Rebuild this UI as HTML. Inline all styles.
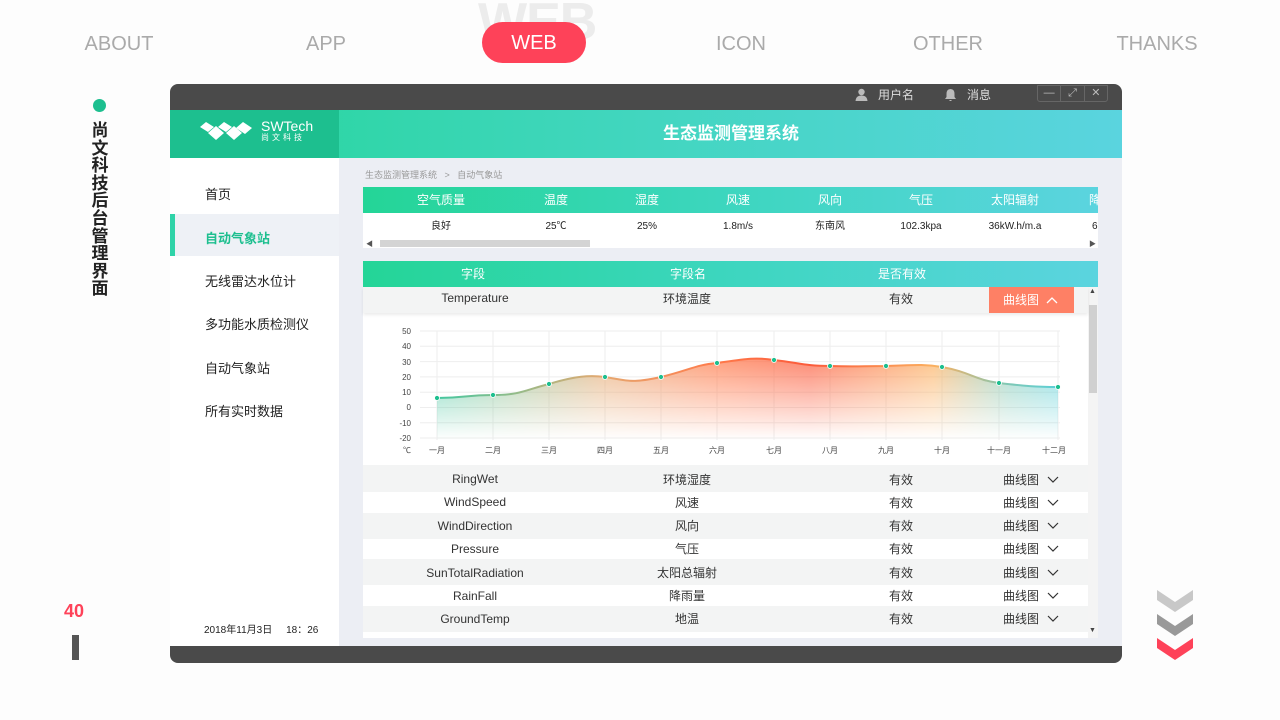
<!DOCTYPE html>
<html><head><meta charset="utf-8"><style>
*{margin:0;padding:0;box-sizing:border-box}
body{width:1280px;height:720px;background:#fdfdfd;position:relative;overflow:hidden;font-family:"Liberation Sans","Noto Sans CJK SC",sans-serif;color:#333}
.a{position:absolute}
.nav{top:32px;font-size:20px;line-height:24px;color:#aaa;transform:translateX(-50%);white-space:nowrap}
.c{transform:translateX(-50%);white-space:nowrap;text-align:center;line-height:16px}
.side{left:205px;font-size:13px;color:#222}
</style></head><body>
<div class="a" style="left:478px;top:-8px;font-size:52px;font-weight:bold;color:#ececec;letter-spacing:-1px">WEB</div>
<div class="a nav" style="left:119px">ABOUT</div>
<div class="a nav" style="left:326px">APP</div>
<div class="a" style="left:482px;top:22px;width:104px;height:41px;border-radius:21px;background:#fe4259;color:#fff;font-size:20px;text-align:center;line-height:43px">WEB</div>
<div class="a nav" style="left:741px">ICON</div>
<div class="a nav" style="left:948px">OTHER</div>
<div class="a nav" style="left:1157px">THANKS</div>

<div class="a" style="left:93px;top:99px;width:13px;height:13px;border-radius:50%;background:#1dbf8f"></div>
<div class="a" style="left:91px;top:122px;width:18px;font-size:17px;line-height:17.6px;font-weight:bold;color:#222;text-align:center">尚文科技后台管理界面</div>
<div class="a" style="left:64px;top:601px;font-size:18px;font-weight:bold;color:#fe4259">40</div>
<div class="a" style="left:72px;top:635px;width:7px;height:25px;background:#555"></div>

<svg class="a" style="left:1155px;top:588px" width="40" height="76" viewBox="0 0 40 76">
<polygon points="2,2 20,14 38,2 38,12 20,24 2,12" fill="#c8c8c8"/>
<polygon points="2,26 20,38 38,26 38,36 20,48 2,36" fill="#999"/>
<polygon points="2,50 20,62 38,50 38,60 20,72 2,60" fill="#fe4259"/>
</svg>

<!-- window -->
<div class="a" style="left:170px;top:84px;width:952px;height:579px;background:#4a4a4a;border-radius:8px"></div>
<div class="a" style="left:855px;top:87px;color:#ddd;font-size:12px;line-height:16px">
<svg width="13" height="13" viewBox="0 0 13 13" style="vertical-align:-2px"><circle cx="6.5" cy="4" r="3.2" fill="#bbb"/><path d="M0.5 13 Q1 7.5 6.5 7.5 Q12 7.5 12.5 13Z" fill="#bbb"/></svg>&nbsp;&nbsp; 用户名</div>
<div class="a" style="left:944px;top:87px;color:#ddd;font-size:12px;line-height:16px">
<svg width="13" height="13" viewBox="0 0 13 13" style="vertical-align:-2px"><path d="M6.5 1 Q2.5 1 2.5 6 L2.5 9 L1 11 L12 11 L10.5 9 L10.5 6 Q10.5 1 6.5 1Z M5 12 L8 12 L6.5 13.5Z" fill="#bbb"/></svg>&nbsp;&nbsp; 消息</div>
<div class="a" style="left:1037px;top:85px;width:71px;height:17px;border:1px solid #666;border-radius:0 0 3px 3px;display:flex;color:#bbb;font-size:11px">
<div style="flex:1;border-right:1px solid #666;text-align:center;line-height:15px">—</div>
<div style="flex:1;border-right:1px solid #666;text-align:center;line-height:15px">⤢</div>
<div style="flex:1;text-align:center;line-height:15px">✕</div></div>

<div class="a" style="left:170px;top:110px;width:952px;height:48px;background:linear-gradient(90deg,#25d59b,#3dd6b9 40%,#5ad4df)"></div>
<div class="a" style="left:170px;top:110px;width:169px;height:48px;background:#1dbf8f"></div>
<svg class="a" style="left:200px;top:120px" width="54" height="24" viewBox="0 0 54 24">
<polygon points="0,7 6,2 14,7 8,12" fill="#fff"/>
<polygon points="8,13 16,6 24,13 16,20" fill="#fff"/>
<polygon points="18,7 24,2 32,7 26,12" fill="#fff"/>
<polygon points="26,13 34,6 42,13 34,20" fill="#fff"/>
<polygon points="36,8 43,2 52,8 45,14" fill="#fff"/>
</svg>
<div class="a" style="left:261px;top:119px;color:#fff;font-size:14px;line-height:14px">SWTech</div>
<div class="a" style="left:261px;top:132px;color:#fff;font-size:8px;letter-spacing:3px">尚文科技</div>
<div class="a c" style="left:731px;top:124px;color:#fff;font-size:17px;font-weight:bold;line-height:20px">生态监测管理系统</div>

<div class="a" style="left:170px;top:158px;width:169px;height:488px;background:#fff"></div>
<div class="a" style="left:339px;top:158px;width:783px;height:488px;background:#eceef4"></div>
<div class="a" style="left:170px;top:214px;width:169px;height:42px;background:#eef1f6"></div>
<div class="a" style="left:170px;top:214px;width:5px;height:42px;background:#2fd3a8"></div>
<div class="a side" style="top:184px">首页</div>
<div class="a side" style="top:228px;color:#1dbf8f;font-weight:bold">自动气象站</div>
<div class="a side" style="top:271px">无线雷达水位计</div>
<div class="a side" style="top:314px">多功能水质检测仪</div>
<div class="a side" style="top:358px">自动气象站</div>
<div class="a side" style="top:401px">所有实时数据</div>
<div class="a" style="left:204px;top:621px;font-size:10px;color:#222">2018年11月3日&nbsp;&nbsp;&nbsp;&nbsp;&nbsp;18：26</div>

<div class="a" style="left:365px;top:168px;font-size:9px;color:#999">生态监测管理系统 &nbsp;&nbsp;&gt;&nbsp;&nbsp; 自动气象站</div>

<!-- table1 -->
<div class="a" style="left:363px;top:187px;width:735px;height:26px;background:linear-gradient(90deg,#24d597,#3dd6bf 50%,#5bd4df)"></div>
<div class="a" style="left:363px;top:213px;width:735px;height:35px;background:#fff"></div>
<div class="a" style="left:380px;top:240px;width:210px;height:7px;background:#d4d4d4"></div>
<div class="a" style="left:366px;top:239px;font-size:7px;color:#555">◀</div>
<div class="a" style="left:1089px;top:239px;font-size:7px;color:#555">▶</div>
<div class="a" style="left:363px;top:187px;width:735px;height:53px;overflow:hidden;font-size:12px;color:#fff">
<div class="a c" style="left:78px;top:5px">空气质量</div>
<div class="a c" style="left:193px;top:5px">温度</div>
<div class="a c" style="left:284px;top:5px">湿度</div>
<div class="a c" style="left:375px;top:5px">风速</div>
<div class="a c" style="left:467px;top:5px">风向</div>
<div class="a c" style="left:558px;top:5px">气压</div>
<div class="a c" style="left:652px;top:5px">太阳辐射</div>
<div class="a" style="left:726px;top:5px;line-height:16px">降</div>
<div style="font-size:10px;color:#222">
<div class="a c" style="left:78px;top:32px">良好</div>
<div class="a c" style="left:193px;top:32px">25℃</div>
<div class="a c" style="left:284px;top:32px">25%</div>
<div class="a c" style="left:375px;top:32px">1.8m/s</div>
<div class="a c" style="left:467px;top:32px">东南风</div>
<div class="a c" style="left:558px;top:32px">102.3kpa</div>
<div class="a c" style="left:652px;top:32px">36kW.h/m.a</div>
<div class="a" style="left:729px;top:32px;line-height:16px">6</div>
</div></div>

<!-- table2 -->
<div class="a" style="left:363px;top:261px;width:735px;height:26px;background:linear-gradient(90deg,#24d597,#3dd6bf 50%,#5bd4df)"></div>
<div class="a c" style="left:473px;top:266px;color:#fff;font-size:12px">字段</div>
<div class="a c" style="left:688px;top:266px;color:#fff;font-size:12px">字段名</div>
<div class="a c" style="left:902px;top:266px;color:#fff;font-size:12px">是否有效</div>
<div class="a" style="left:363px;top:287px;width:725px;height:351px;background:#fff"></div>
<div class="a" style="left:1088px;top:287px;width:10px;height:351px;background:#f4f4f4"></div>
<div class="a" style="left:1089px;top:305px;width:8px;height:88px;background:#d0d0d0"></div>
<div class="a" style="left:1089px;top:288px;font-size:7px;color:#444">▲</div>
<div class="a" style="left:1089px;top:627px;font-size:7px;color:#444">▼</div>
<div class="a" style="left:363px;top:287px;width:725px;height:26px;background:#f3f4f4;box-shadow:0 2px 3px rgba(0,0,0,.08)"></div>
<div class="a c" style="left:475px;top:290px;font-size:12px;color:#333">Temperature</div>
<div class="a c" style="left:687px;top:291px;font-size:12px;color:#333">环境温度</div>
<div class="a c" style="left:901px;top:291px;font-size:12px;color:#333">有效</div>
<div class="a" style="left:989px;top:287px;width:85px;height:26px;background:#fe8065;color:#fff;font-size:12px;line-height:26px;padding-left:14px">曲线图 &nbsp;<svg width="12" height="8" viewBox="0 0 12 8"><path d="M1 7 L6 2 L11 7" fill="none" stroke="#fff" stroke-width="1.3"/></svg></div>

<svg class="a" style="left:363px;top:313px" width="725" height="150" viewBox="363 313 725 150">
<defs>
<linearGradient id="h" x1="437" x2="1058" gradientUnits="userSpaceOnUse">
<stop offset="0" stop-color="#44c7a0"/><stop offset=".12" stop-color="#8fbc8a"/><stop offset=".27" stop-color="#e6a870"/><stop offset=".45" stop-color="#ff7a4a"/><stop offset=".6" stop-color="#fb5a3a"/><stop offset=".8" stop-color="#fbb060"/><stop offset=".92" stop-color="#7fc8b5"/><stop offset="1" stop-color="#5bd0d8"/></linearGradient>
<linearGradient id="v" x1="0" y1="355" x2="0" y2="440" gradientUnits="userSpaceOnUse"><stop offset="0" stop-color="#fff" stop-opacity=".75"/><stop offset="1" stop-color="#fff" stop-opacity="0"/></linearGradient>
<mask id="m"><rect x="363" y="313" width="725" height="150" fill="url(#v)"/></mask>
</defs>
<g stroke="#eee" stroke-width="1">
<line x1="420" x2="1060" y1="331" y2="331"/><line x1="420" x2="1060" y1="346.3" y2="346.3"/><line x1="420" x2="1060" y1="361.6" y2="361.6"/><line x1="420" x2="1060" y1="376.9" y2="376.9"/><line x1="420" x2="1060" y1="392.2" y2="392.2"/><line x1="420" x2="1060" y1="407.5" y2="407.5"/><line x1="420" x2="1060" y1="422.8" y2="422.8"/><line x1="420" x2="1060" y1="438" y2="438"/>
<line x1="437" x2="437" y1="331" y2="440"/><line x1="493" x2="493" y1="331" y2="440"/><line x1="549" x2="549" y1="331" y2="440"/><line x1="605" x2="605" y1="331" y2="440"/><line x1="661" x2="661" y1="331" y2="440"/><line x1="717" x2="717" y1="331" y2="440"/><line x1="774" x2="774" y1="331" y2="440"/><line x1="830" x2="830" y1="331" y2="440"/><line x1="886" x2="886" y1="331" y2="440"/><line x1="942" x2="942" y1="331" y2="440"/><line x1="999" x2="999" y1="331" y2="440"/><line x1="1058" x2="1058" y1="331" y2="440"/>
</g>
<path mask="url(#m)" fill="url(#h)" d="M437 398 C465 398,465 395,493 395 C521 395,525 390,549 384 C575 376,590 375,605 377 C625 380,630 384,661 377 C690 370,695 365,717 363 C745 359,755 357,774 360 C800 363,805 366,830 366 C858 367,860 366,886 366 C914 365,925 364,942 367 C970 372,975 380,999 383 C1025 386,1035 387,1058 387 L1058 440 L437 440Z"/>
<path fill="none" stroke="url(#h)" stroke-width="2" d="M437 398 C465 398,465 395,493 395 C521 395,525 390,549 384 C575 376,590 375,605 377 C625 380,630 384,661 377 C690 370,695 365,717 363 C745 359,755 357,774 360 C800 363,805 366,830 366 C858 367,860 366,886 366 C914 365,925 364,942 367 C970 372,975 380,999 383 C1025 386,1035 387,1058 387"/>
<g fill="#1dbf8f" stroke="#fff" stroke-width=".8">
<circle cx="437" cy="398" r="2.5"/><circle cx="493" cy="395" r="2.5"/><circle cx="549" cy="384" r="2.5"/><circle cx="605" cy="377" r="2.5"/><circle cx="661" cy="377" r="2.5"/><circle cx="717" cy="363" r="2.5"/><circle cx="774" cy="360" r="2.5"/><circle cx="830" cy="366" r="2.5"/><circle cx="886" cy="366" r="2.5"/><circle cx="942" cy="367" r="2.5"/><circle cx="999" cy="383" r="2.5"/><circle cx="1058" cy="387" r="2.5"/>
</g>
<g font-size="8" fill="#444" text-anchor="end" font-family="Liberation Sans,Noto Sans CJK SC,sans-serif">
<text x="411" y="334">50</text><text x="411" y="349">40</text><text x="411" y="365">30</text><text x="411" y="380">20</text><text x="411" y="395">10</text><text x="411" y="410">0</text><text x="411" y="426">-10</text><text x="411" y="441">-20</text><text x="411" y="453">℃</text>
</g>
<g font-size="8" fill="#444" text-anchor="middle" font-family="Liberation Sans,Noto Sans CJK SC,sans-serif">
<text x="437" y="453">一月</text><text x="493" y="453">二月</text><text x="549" y="453">三月</text><text x="605" y="453">四月</text><text x="661" y="453">五月</text><text x="717" y="453">六月</text><text x="774" y="453">七月</text><text x="830" y="453">八月</text><text x="886" y="453">九月</text><text x="942" y="453">十月</text><text x="999" y="453">十一月</text><text x="1054" y="453">十二月</text>
</g>
</svg>

<div class="a" style="left:363px;top:465px;width:725px">
<div style="height:27px;background:#f3f4f4"></div><div style="height:21px"></div><div style="height:26px;background:#f3f4f4"></div><div style="height:20px"></div><div style="height:26px;background:#f3f4f4"></div><div style="height:21px"></div><div style="height:26px;background:#f3f4f4"></div>
</div>
<div class="a" style="left:363px;top:465px;width:725px;font-size:12px;color:#333">
<div class="a c" style="left:112px;top:6px">RingWet</div><div class="a c" style="left:324px;top:7px">环境湿度</div><div class="a c" style="left:538px;top:7px">有效</div><div class="a c" style="left:658px;top:7px">曲线图</div>
<div class="a c" style="left:112px;top:29px">WindSpeed</div><div class="a c" style="left:324px;top:30px">风速</div><div class="a c" style="left:538px;top:30px">有效</div><div class="a c" style="left:658px;top:30px">曲线图</div>
<div class="a c" style="left:112px;top:53px">WindDirection</div><div class="a c" style="left:324px;top:53px">风向</div><div class="a c" style="left:538px;top:53px">有效</div><div class="a c" style="left:658px;top:53px">曲线图</div>
<div class="a c" style="left:112px;top:76px">Pressure</div><div class="a c" style="left:324px;top:76px">气压</div><div class="a c" style="left:538px;top:76px">有效</div><div class="a c" style="left:658px;top:76px">曲线图</div>
<div class="a c" style="left:112px;top:100px">SunTotalRadiation</div><div class="a c" style="left:324px;top:100px">太阳总辐射</div><div class="a c" style="left:538px;top:100px">有效</div><div class="a c" style="left:658px;top:100px">曲线图</div>
<div class="a c" style="left:112px;top:123px">RainFall</div><div class="a c" style="left:324px;top:123px">降雨量</div><div class="a c" style="left:538px;top:123px">有效</div><div class="a c" style="left:658px;top:123px">曲线图</div>
<div class="a c" style="left:112px;top:146px">GroundTemp</div><div class="a c" style="left:324px;top:146px">地温</div><div class="a c" style="left:538px;top:146px">有效</div><div class="a c" style="left:658px;top:146px">曲线图</div>
</div>
<svg class="a" style="left:1047px;top:476px" width="12" height="150" viewBox="0 0 12 150">
<g fill="none" stroke="#333" stroke-width="1.2">
<path d="M1 1 L6 6 L11 1"/><path d="M1 24 L6 29 L11 24"/><path d="M1 47 L6 52 L11 47"/><path d="M1 70 L6 75 L11 70"/><path d="M1 94 L6 99 L11 94"/><path d="M1 117 L6 122 L11 117"/><path d="M1 140 L6 145 L11 140"/>
</g></svg>
</body></html>
